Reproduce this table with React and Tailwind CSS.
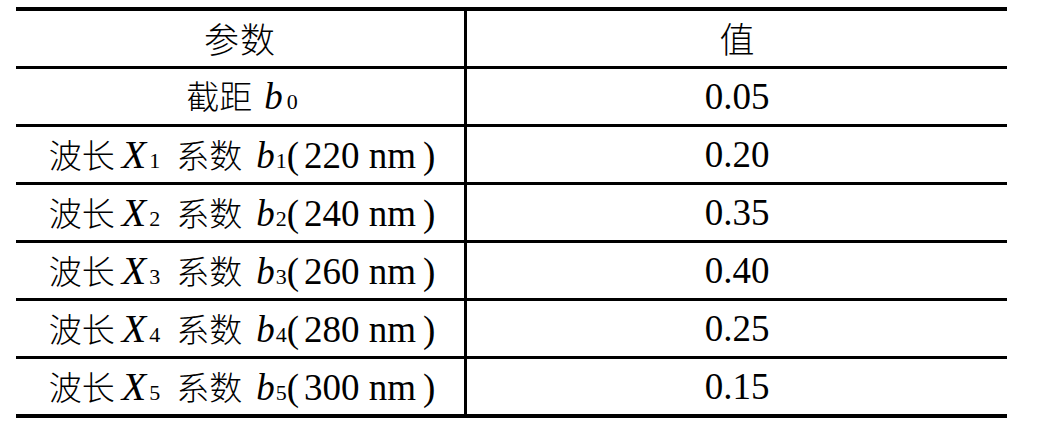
import React from 'react';

const cjk = "font-['Noto_Sans_CJK_SC',sans-serif] font-light text-[33px]";
const latin = "font-['Liberation_Serif',serif] text-[37px]";

const Sub = ({ children, className = '' }) => (
  <span className={`font-['Liberation_Serif',serif] text-[22px] ${className}`}>{children}</span>
);

const WaveLabel = ({ n, nm }) => (
  <span className="inline-flex items-baseline whitespace-nowrap">
    <span className={cjk}>波长</span>
    <span className={`${latin} text-[40px] italic ml-[7px]`}>X</span>
    <Sub className="ml-[3px]">{n}</Sub>
    <span className={`${cjk} ml-[16px]`}>系数</span>
    <span className={`${latin} italic ml-[14px]`}>b</span>
    <Sub className="ml-[1px]">{n}</Sub>
    <span className={`${latin} mr-[5px]`}>(</span>
    <span className={latin}>{nm} nm</span>
    <span className={`${latin} ml-[7px]`}>)</span>
  </span>
);

const rows = [
  {
    label: (
      <span className="inline-flex items-baseline whitespace-nowrap">
        <span className={cjk}>截距</span>
        <span className={`${latin} italic ml-[12px]`}>b</span>
        <Sub className="ml-[4px]">0</Sub>
      </span>
    ),
    value: '0.05',
  },
  { label: <WaveLabel n="1" nm="220" />, value: '0.20' },
  { label: <WaveLabel n="2" nm="240" />, value: '0.35' },
  { label: <WaveLabel n="3" nm="260" />, value: '0.40' },
  { label: <WaveLabel n="4" nm="280" />, value: '0.25' },
  { label: <WaveLabel n="5" nm="300" />, value: '0.15' },
];

export default function App() {
  return (
    <div className="w-[1054px] h-[425px] bg-white text-black overflow-hidden pt-[7px] pl-[16px]">
      <div className="w-[991px] border-t-4 border-b-4 border-black">
        {/* header */}
        <div className="flex h-[58px] border-b-[3px] border-black">
          <div className="w-[451px] border-r-[3px] border-black flex items-center justify-center">
            <span className={`${cjk} text-[35px] tracking-[1px]`}>参数</span>
          </div>
          <div className="flex-1 flex items-center justify-center">
            <span className={`${cjk} text-[35px]`}>值</span>
          </div>
        </div>

        {rows.map((r, i) => (
          <div
            key={i}
            className={`flex ${i === rows.length - 1 ? 'h-[55px]' : 'h-[58px] border-b-[3px] border-black'}`}
          >
            <div className="w-[451px] border-r-[3px] border-black flex items-center justify-center pl-[4px]">
              {r.label}
            </div>
            <div className="flex-1 flex items-center justify-center">
              <span className={latin}>{r.value}</span>
            </div>
          </div>
        ))}
      </div>
    </div>
  );
}
